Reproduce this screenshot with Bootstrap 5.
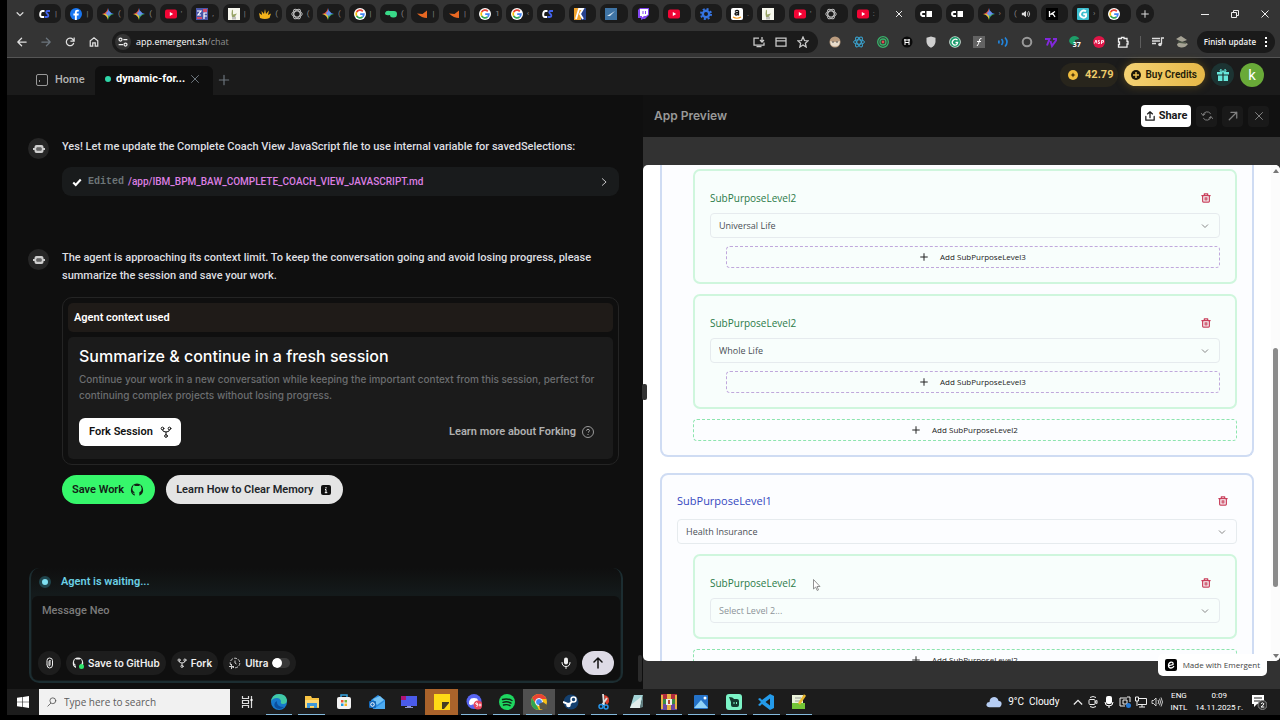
<!DOCTYPE html>
<html lang="en">
<head>
<meta charset="utf-8">
<meta name="viewport" content="width=device-width, initial-scale=1">
<title>Emergent – App Preview</title>
<link href="https://cdn.jsdelivr.net/npm/bootstrap@5.3.0/dist/css/bootstrap.min.css" rel="stylesheet">
<style>
  body{font-family:Roboto,"Liberation Sans",sans-serif;font-size:11px;line-height:18px;color:#dcdcdc;background:#000;height:100vh;overflow:hidden;padding:0 0 5px 7px}
  svg{display:block;flex:none}
  button,input,select,textarea{font-family:inherit}
  button{border:0;background:none;color:inherit;padding:0}
  a{color:inherit;text-decoration:none}
  .s8{width:8px;height:8px}.s10{width:10px;height:10px}.s12{width:12px;height:12px}.s14{width:14px;height:14px}.s16{width:16px;height:16px}
  .ln,.ln3{fill:none;stroke:currentColor;stroke-width:2;stroke-linecap:round;stroke-linejoin:round}
  .ln3{stroke-width:3}
  .inter{font-family:Inter,"Liberation Sans",sans-serif}
  .segoe{font-family:"Open Sans","Noto Sans",sans-serif}

  /* browser chrome */
  .strip{background:#343434;height:27px;padding-left:8px}
  .chev{width:19px}
  .btab{flex:1 1 0;min-width:0;height:19px;background:#1b1b1b;border-radius:7px;padding-left:5px;overflow:hidden;font-size:8px;color:#888;gap:4px}
  .btab.on{background:none;color:#eee}
  .newtab{width:18px;height:19px;border-radius:9px;background:#1b1b1b;margin:0 36px 0 5px}
  .winbtn{width:30px;height:27px}
  .tools{background:#343434;height:31px;border-bottom:1px solid #555;padding:3px 5px 4px 3px}
  .nav-b{width:24px;height:22px;color:#e0e0e0}
  .urlbar{background:#1b1b1b;border-radius:11px;height:22px;margin-left:6px;padding:0 9px 0 3px;font-size:9px;font-weight:500}
  .site{width:16px;height:16px;border-radius:50%;background:#343434;margin-right:5px}
  .exts{margin-left:11px;gap:12px}
  .finish{background:#1a1a1a;border-radius:11px;height:22px;padding:0 5px 0 7px;font-size:8px;font-weight:600;color:#f2f2f2;margin-left:9px}

  /* app header */
  .apphead{background:#1b1b1b;height:37px;padding:0 16px 0 28px}
  .hometab{color:#b4b4b4;width:60px;padding-top:6px;gap:6px}
  .worktab{background:#0f0f0f;border-radius:6px 6px 0 0;height:29px;width:118px;padding:0 12px 4px 10px;color:#fff;font-weight:700}
  .dot{width:6px;height:6px;flex:none;border-radius:50%;background:#2fd6a8;margin-right:5px}
  .credits{background:#28251c;border-radius:12px;height:24px;padding:0 5px 0 7px;gap:6px;color:#edcb6a;font-weight:700}
  .buy{background:linear-gradient(90deg,#f5d273,#e6b847);border-radius:12px;height:23px;padding:0 8px 0 7px;gap:4px;color:#241c08;font-weight:600;font-size:10px;box-shadow:0 0 8px #8a6b1c99}
  .gift{width:23px;height:23px;border-radius:50%;background:#1c3332;color:#67e8dc}
  .who{width:24px;height:24px;border-radius:50%;background:#69aa38;color:#fff;font-size:15px}

  /* chat */
  .chat{background:#0f0f0f;width:636px;flex:none;padding:0 20px 6px 21px}
  .bot{width:21px;height:21px;border-radius:50%;background:#262626;color:#cfcfcf;flex:none}
  .msg{gap:13px;color:#dedee0;margin-right:4px}
  .first{margin-top:43px;margin-bottom:53px}
  .msgtext{font-weight:500;font-size:11px;line-height:18px}
  .edited{background:#191b1c;border-radius:9px;height:29px;padding:0 10px;margin:11px 0 0}
  .mono{font-family:"Liberation Mono",monospace;font-size:10px;font-weight:700;color:#6d7577;margin:0 4px 0 6px}
  .path{color:#dd7fe3;font-size:10px;font-weight:500}
  .fork{border:1px solid #242424;border-radius:10px;padding:5px;margin-top:12px;gap:5px}
  .forkhead{background:#1f1b18;border-radius:5px;height:29px;padding:0 6px;color:#fff;font-weight:600}
  .forkbody{background:#1b1b1b;border-radius:5px;padding:8px 11px 13px}
  .forkbody h2{font-size:16px;line-height:22px;font-weight:500;color:#fff;margin:0}
  .forkbody p{font-size:10px;line-height:16px;color:#6c6e70;font-weight:500;margin:4px 0 15px}
  .bfork{background:#fff;color:#111;border-radius:6px;height:28px;padding:0 9px 0 10px;gap:7px;font-weight:600}
  .learn{color:#b0b0b0;gap:6px;font-weight:600;margin-right:8px}
  .pill{height:29px;border-radius:15px;padding:0 11px 0 10px;gap:6px;font-weight:600;color:#122015}
  .composer{margin:0 0 0 1px;border-radius:10px;border:2px solid #1c2d31;border-top-width:0;background:linear-gradient(#0f0f0f,#141a1b 26px);padding:0 1px 1px}
  .composer-in{background:#0f0f0f;border-radius:6px;padding:4px 6px 5px}
  .waiting{height:28px;color:#6bd0e6;font-weight:600;padding-left:7px;gap:10px}
  .ring{width:12px;height:12px;border-radius:50%;border:3px solid #20454d;background:#7fe0f2}
  .composer textarea{display:block;background:none;border:0;color:#fff;height:51px;resize:none;width:100%;padding:2px 4px;font-weight:500;outline:0}
  .composer textarea::placeholder{color:#7b7b7b}
  .chip{background:#1d1d1d;border-radius:12px;height:24px;padding:0 6px;color:#f0f0f0;font-weight:600;font-size:10px;gap:4px}
  .round{width:23px;padding:0}
  .send{background:#dedbe6;color:#111;width:32px;height:24px;border-radius:12px}
  .chip .form-check-input{width:18px;height:10px;min-height:0;margin:0;border:0;background-color:#383838;background-image:url("data:image/svg+xml,%3csvg xmlns='http://www.w3.org/2000/svg' viewBox='-4 -4 8 8'%3e%3ccircle r='4' fill='%23fff'/%3e%3c/svg%3e")}
  .form-switch{padding:0;min-height:0;margin:0}
  .thumbL{right:1px;bottom:7px;width:4px;height:27px;border-radius:2px;background:#2b2b2b}
  .grip{right:-4px;top:289px;width:5px;height:16px;border-radius:2px;background:#333;z-index:3}

  /* preview */
  .preview{background:#323232;min-width:0}
  .prevhead{background:#111;height:42px;padding:0 11px;font-size:12px;font-weight:600;color:#999}
  .share{background:#fff;color:#181818;border-radius:4px;width:50px;height:22px;font-size:11px;font-weight:700;gap:4px}
  .sq{width:21px;height:21px;border-radius:4px;background:#191919;color:#808080}
  .frame{background:#fff;margin:28px 0 28px;border-radius:5px;overflow:hidden;color:#333;font-size:9px}
  .page-in{padding:0 18px 0 17px}
  .l1{border:2px solid #cfdcf3;border-radius:8px;background:#fcfdff;padding:17px 15px 14px}
  .l1.cut{border-top:0;border-radius:0 0 8px 8px;padding-top:4px}
  .l2{border:2px solid #cff6dd;border-radius:7px;background:#f8fefc;padding:18px 15px 14px;margin-left:16px}
  .lab1{font-size:11px;font-weight:500;line-height:18px;color:#3447c0}
  .lab2{font-size:10px;font-weight:500;line-height:18px;color:#2c7a48}
  .trash{color:#c9405c;margin-right:9px}
  .frame .form-select{font-size:9px;line-height:14px;height:25px;padding:4px 24px 4px 8px;border:1px solid #e6ebee;border-radius:4px;background-color:transparent;color:#4a4f55;background-size:8px;background-position:right 10px center;margin-top:6px;background-image:url("data:image/svg+xml,%3csvg xmlns='http://www.w3.org/2000/svg' viewBox='0 0 16 16'%3e%3cpath fill='none' stroke='%23888' stroke-width='2' d='m2 5 6 6 6-6'/%3e%3c/svg%3e")}
  .frame .form-select.muted{color:#8d9499}
  .frame .form-select.top{margin-top:9px}
  .add{border:1px dashed #8ce5ae;border-radius:4px;height:22px;width:100%;font-size:8px;font-weight:500;color:#222;gap:12px}
  .add.p{border-color:#c0a8dc;width:auto;align-self:stretch;margin:8px 0 0 16px}
  .bar-r{width:9px;right:0;top:0;bottom:0;background:#fcfcfc;color:#777;padding:4px 0 3px}
  .thumbR{width:5px;height:239px;margin-top:175px;border-radius:3px;background:#8b8b8b}
  .made{right:13px;bottom:13px;height:22px;border-radius:5px;background:#fff;color:#444;padding:0 7px;gap:6px;font-size:8px;font-weight:500}
  .cursor{left:170px;top:484px}

  /* taskbar */
  .taskbar{background:#1c1c1c;height:26px;color:#fff}
  .start{width:32px}
  .search{background:#f1f1f1;width:191px;height:26px;padding-left:8px;gap:7px;color:#555}
  .search input{border:0;background:none;font-size:10px;width:150px;padding:0;color:#444;outline:0}
  .search input::placeholder{color:#5c5c5c}
  .tv{width:33px}
  .apps{width:552px}
  .app{flex:1 1 0;height:26px;position:relative}
  .app.run::after{content:"";position:absolute;left:3px;right:3px;bottom:0;height:1px;background:#84b9dc}
  .tray{font-family:Roboto,sans-serif;font-size:8px;line-height:12px;text-align:center}
  .weather{font-size:10px;gap:6px;margin-right:9px}
</style>
</head>
<body class="d-flex flex-column">
<svg width="0" height="0" class="position-absolute" aria-hidden="true">
  <symbol id="cs" viewBox="0 0 12 12"><path d="M5.500 3H3.500Q1.500 3 1.200 6Q1 9 3 9H5" fill="none" stroke="#fff" stroke-width="2"/><path d="M11 3H8Q6.500 4 8 5.500L9 6.500Q10 8.500 8 9H5.500" fill="none" stroke="#4263eb" stroke-width="1.800"/></symbol>
  <symbol id="fb" viewBox="0 0 12 12"><circle cx="6" cy="6" r="6" fill="#1877f2"/><path d="M6.800 12V7.500h1.700l.3-1.900h-2V4.500q0-1 1.100-1h.9V1.900q-3.800-.7-3.900 2v1.700H3.400v1.900h1.500V12z" fill="#fff"/></symbol>
  <symbol id="gem" viewBox="0 0 12 12"><path d="M6 0Q7 5 12 6L6 6z" fill="#4285f4"/><path d="M6 0Q5 5 0 6H6z" fill="#ea5a45"/><path d="M0 6Q5 7 6 12V6z" fill="#e8c33a"/><path d="M12 6Q7 7 6 12V6z" fill="#37a864"/><circle cx="6.500" cy="5.500" r="2.300" fill="#6f8fe8"/></symbol>
  <symbol id="yt" viewBox="0 0 12 12"><rect y="1.500" width="12" height="9" rx="2" fill="#f20535"/><path d="M4.800 4v4l3.400-2z" fill="#fff"/></symbol>
  <symbol id="zf" viewBox="0 0 12 12"><path fill="#4a56a8" d="M0 0h12v12H0z"/><path d="M1 3h4L2 7h3M8 8h3M8 11V5h3" stroke="#fff" stroke-width="1.200" fill="none"/><path d="M7 1h4v3H7zM1 9h5v2H1z" fill="#d44a68"/></symbol>
  <symbol id="goose" viewBox="0 0 12 12"><path fill="#f7f7ee" d="M0 0h12v12H0z"/><path d="M4 1.500l1 1v4l4-1L6.500 9H4L3.500 6z" fill="#98a467"/><path d="M5 9v2.500M7 8.500v3" stroke="#888"/></symbol>
  <symbol id="claw" viewBox="0 0 12 12"><path d="M1 10L0 5l3 2-.5-4L5 6l1-5 1 5 3-3.500L9 7l3-1.500L10.500 10Q6 12 1 10z" fill="#f2b21b"/></symbol>
  <symbol id="oai" viewBox="0 0 12 12"><g fill="none" stroke="#bbb"><ellipse cx="6" cy="6" rx="5.200" ry="3"/><ellipse cx="6" cy="6" rx="5.200" ry="3" transform="rotate(60 6 6)"/><ellipse cx="6" cy="6" rx="5.200" ry="3" transform="rotate(120 6 6)"/></g></symbol>
  <symbol id="goo" viewBox="0 0 12 12"><circle cx="6" cy="6" r="6" fill="#fff"/><g fill="none" stroke-width="1.700"><path d="M8.800 3.300A3.900 3.900 0 0 0 2.600 4.200" stroke="#ea4335"/><path d="M2.600 4.200a3.900 3.900 0 0 0 0 3.600" stroke="#fbbc05"/><path d="M2.600 7.800a3.900 3.900 0 0 0 6 1.100" stroke="#34a853"/><path d="M8.600 8.900A3.900 3.900 0 0 0 9.900 6.100H6.200" stroke="#4285f4"/></g></symbol>
  <symbol id="grn" viewBox="0 0 12 12"><path d="M0 5Q1 2 5 3h4q3 0 3 3 0 4-4 3.500Q5 9.500 5 7 0 8 0 5z" fill="#39d988"/></symbol>
  <symbol id="org" viewBox="0 0 12 12"><path d="M1 5.500L6.500 6 11 2.500V10Q6 10 1 5.500z" fill="#e86822"/></symbol>
  <symbol id="kick" viewBox="0 0 12 12"><path fill="#f0a32d" d="M0 0h7v12H0z"/><path fill="#26418f" d="M7 0h5v12H7z"/><path d="M2 11L5 1h4L6 6l3 5" fill="none" stroke="#fff" stroke-width="1.800"/></symbol>
  <symbol id="blu" viewBox="0 0 12 12"><path fill="#3f74a5" d="M0 0h12v12H0z"/><path d="M2 8l8-5-5 5z" fill="#d7e8f5"/></symbol>
  <symbol id="tw" viewBox="0 0 12 12"><path d="M1 2l2-2h9v7L8 11H6l-2 1v-2H1z" fill="#8447f3"/><path d="M3 1h8v5.500L9 8H7L5 9.500V8H3z" fill="#fff"/><path d="M6 3v3M8.500 3v3" stroke="#8447f3"/></symbol>
  <symbol id="gear" viewBox="0 0 12 12"><circle cx="6" cy="6" r="3.200" fill="none" stroke="#3574e2" stroke-width="2.400"/><circle cx="6" cy="6" r="5" fill="none" stroke="#3574e2" stroke-width="2" stroke-dasharray="2 1.930"/></symbol>
  <symbol id="amz" viewBox="0 0 12 12"><rect width="12" height="12" rx="2" fill="#fff"/><path d="M4 3.500Q6 1.500 7.500 3v4.500M7.500 4.500Q4 4.500 4 6q.5 2 3.500 0" fill="none" stroke="#111" stroke-width="1.300"/><path d="M2 9q4 2.500 8 0" fill="none" stroke="#f59a1c" stroke-width="1.200"/></symbol>
  <symbol id="ce" viewBox="0 0 12 12"><path d="M5 4H2.500Q1 4.500 1 6t1.500 2H5" fill="none" stroke="#fff" stroke-width="2"/><path d="M6.500 3H12v6H6.500z" fill="#fff"/></symbol>
  <symbol id="snd" viewBox="0 0 12 12"><path d="M1 4.500v3h2L6 10V2L3 4.500z" fill="#ddd"/><path d="M7.500 4q1.500 2 0 4M9 2.500q3 3.500 0 7" fill="none" stroke="#ddd"/></symbol>
  <symbol id="spk" viewBox="0 0 12 12"><path d="M1 4.500v3h1.500L5 10V2L2.500 4.500zM7 4q1.500 2 0 4M8.500 2.700q2 3.300 0 6.600M10 1.500q3 4.500 0 9" fill="none" stroke="#ddd" stroke-width=".9"/></symbol>
  <symbol id="kk" viewBox="0 0 12 12"><path fill="#000" d="M0 0h12v12H0z"/><path d="M3.500 3v6M9 3.500L5 6h2l2 3" fill="none" stroke="#fff" stroke-width="1.300"/></symbol>
  <symbol id="gt" viewBox="0 0 12 12"><rect width="12" height="12" rx="1" fill="#3dbfd0"/><path d="M9 3.300Q6 1.500 4 4t0 4.500q3 2.500 5 0V6.300H6.300" fill="none" stroke="#fff" stroke-width="1.900"/></symbol>
  <symbol id="x" viewBox="0 0 24 24"><path class="ln" d="M5 5l14 14M19 5L5 19"/></symbol>
  <symbol id="xb" viewBox="0 0 24 24"><path class="ln3" d="M4 4l16 16M20 4L4 20"/></symbol>
  <symbol id="plus" viewBox="0 0 24 24"><path class="ln" d="M12 4v16M4 12h16"/></symbol>
  <symbol id="plusb" viewBox="0 0 24 24"><path class="ln3" d="M12 2v20M2 12h20"/></symbol>
  <symbol id="down" viewBox="0 0 24 24"><path class="ln3" d="M5 9l7 7 7-7"/></symbol>
  <symbol id="right" viewBox="0 0 24 24"><path class="ln" d="M8 4l9 8-9 8"/></symbol>
  <symbol id="trash" viewBox="0 0 24 24"><path class="ln3" d="M2 6h20M8 6V2h8v4M4 6v14q0 2 2 2h12q2 0 2-2V6M10 11v6M14 11v6"/></symbol>
  <symbol id="bot" viewBox="0 0 24 24"><path fill="currentColor" fill-rule="evenodd" d="M7 4h10q4 0 4 4v8q0 4-4 4H7q-4 0-4-4V8q0-4 4-4zm0 6v4q0 1 1 1h8q1 0 1-1v-4q0-1-1-1H8q-1 0-1 1zM0 10h3v4H0zM21 10h3v4h-3z"/><path d="M9 12h2M13 12h2" stroke="currentColor" stroke-width="3"/></symbol>
  <symbol id="forki" viewBox="0 0 24 24"><g class="ln"><circle cx="5" cy="5" r="2.700"/><circle cx="19" cy="5" r="2.700"/><circle cx="12" cy="20" r="2.700"/><path d="M5 8q0 4 7 4t7-4M12 12v5"/></g></symbol>
  <symbol id="ghc" viewBox="0 0 24 24"><path fill="currentColor" d="M12 1a11 11 0 0 0-4 21v-4q-3 1-4-2 3 2 4 0-4-1-4-6 0-2 1-3 0-2 1-3 2 0 3 1h6q1-1 3-1 1 1 1 3 1 1 1 3 0 5-4 6v6A11 11 0 0 0 12 1z"/></symbol>
  <symbol id="cloud" viewBox="0 0 18 14"><path d="M4 13Q0 12.500.5 9.500 1 7 4 7 4 2 9 1.500q4 0 5 4 4 .5 3.500 4Q17 13 14 13z" fill="#b6cdf3"/></symbol>
</svg>

<!-- browser tabs -->
<div class="strip d-flex align-items-center flex-shrink-0">
  <button class="chev" aria-label="Search tabs"><svg class="s10"><use href="#down"/></svg></button>
  <nav class="d-flex flex-grow-1 gap-1" aria-label="Browser tabs" id="tabs">
    <a href="#" class="btab d-flex align-items-center"><svg class="s12"><use href="#cs"/></svg>|</a>
    <a href="#" class="btab d-flex align-items-center"><svg class="s12"><use href="#fb"/></svg>|</a>
    <a href="#" class="btab d-flex align-items-center"><svg class="s12"><use href="#gem"/></svg>(</a>
    <a href="#" class="btab d-flex align-items-center"><svg class="s12"><use href="#gem"/></svg>(</a>
    <a href="#" class="btab d-flex align-items-center"><svg class="s12"><use href="#yt"/></svg>'</a>
    <a href="#" class="btab d-flex align-items-center"><svg class="s12"><use href="#zf"/></svg>,</a>
    <a href="#" class="btab d-flex align-items-center"><svg class="s12"><use href="#goose"/></svg>|</a>
    <a href="#" class="btab d-flex align-items-center"><svg class="s12"><use href="#claw"/></svg>(</a>
    <a href="#" class="btab d-flex align-items-center"><svg class="s12"><use href="#oai"/></svg>(</a>
    <a href="#" class="btab d-flex align-items-center"><svg class="s12"><use href="#gem"/></svg>(</a>
    <a href="#" class="btab d-flex align-items-center"><svg class="s12"><use href="#goo"/></svg>|</a>
    <a href="#" class="btab d-flex align-items-center"><svg class="s12"><use href="#grn"/></svg>(</a>
    <a href="#" class="btab d-flex align-items-center"><svg class="s12"><use href="#org"/></svg>|</a>
    <a href="#" class="btab d-flex align-items-center"><svg class="s12"><use href="#org"/></svg>|</a>
    <a href="#" class="btab d-flex align-items-center"><svg class="s12"><use href="#goo"/></svg>1</a>
    <a href="#" class="btab d-flex align-items-center"><svg class="s12"><use href="#goo"/></svg>‹</a>
    <a href="#" class="btab d-flex align-items-center"><svg class="s12"><use href="#cs"/></svg></a>
    <a href="#" class="btab d-flex align-items-center"><svg class="s12"><use href="#kick"/></svg></a>
    <a href="#" class="btab d-flex align-items-center"><svg class="s12"><use href="#blu"/></svg></a>
    <a href="#" class="btab d-flex align-items-center"><svg class="s12"><use href="#tw"/></svg></a>
    <a href="#" class="btab d-flex align-items-center"><svg class="s12"><use href="#yt"/></svg></a>
    <a href="#" class="btab d-flex align-items-center"><svg class="s12"><use href="#gear"/></svg></a>
    <a href="#" class="btab d-flex align-items-center"><svg class="s12"><use href="#amz"/></svg>.</a>
    <a href="#" class="btab d-flex align-items-center"><svg class="s12"><use href="#goose"/></svg></a>
    <a href="#" class="btab d-flex align-items-center"><svg class="s12"><use href="#yt"/></svg>'</a>
    <a href="#" class="btab d-flex align-items-center"><svg class="s12"><use href="#oai"/></svg></a>
    <a href="#" class="btab d-flex align-items-center"><svg class="s12"><use href="#yt"/></svg>:</a>
    <a href="#" class="btab on d-flex align-items-center justify-content-center"><svg class="s8"><use href="#xb"/></svg></a>
    <a href="#" class="btab d-flex align-items-center"><svg class="s12"><use href="#ce"/></svg></a>
    <a href="#" class="btab d-flex align-items-center"><svg class="s12"><use href="#ce"/></svg></a>
    <a href="#" class="btab d-flex align-items-center"><svg class="s12"><use href="#gem"/></svg>›</a>
    <a href="#" class="btab d-flex align-items-center">(<svg class="s10"><use href="#snd"/></svg></a>
    <a href="#" class="btab d-flex align-items-center"><svg class="s12"><use href="#kk"/></svg></a>
    <a href="#" class="btab d-flex align-items-center"><svg class="s12"><use href="#gt"/></svg>›</a>
    <a href="#" class="btab d-flex align-items-center"><svg class="s12"><use href="#goo"/></svg></a>
  </nav>
  <button class="newtab d-flex align-items-center justify-content-center" aria-label="New tab"><svg class="s8"><use href="#plusb"/></svg></button>
  <button class="winbtn d-flex align-items-center justify-content-center" aria-label="Minimize"><svg class="s8" viewBox="0 0 8 8"><path d="M0 4.500h8" stroke="#eee"/></svg></button>
  <button class="winbtn d-flex align-items-center justify-content-center" aria-label="Restore"><svg class="s8" viewBox="0 0 8 8"><path d="M.5 2.500h5v5h-5zM2.500 2V.5h5v5H6" fill="none" stroke="#eee"/></svg></button>
  <button class="winbtn d-flex align-items-center justify-content-center" aria-label="Close"><svg class="s8" viewBox="0 0 8 8"><path d="M.5.5l7 7M7.500.5l-7 7" stroke="#eee"/></svg></button>
</div>

<!-- address row -->
<div class="tools d-flex align-items-center flex-shrink-0 segoe">
  <button class="nav-b d-flex align-items-center justify-content-center" aria-label="Back"><svg class="s10" viewBox="0 0 24 24"><path class="ln3" d="M22 12H3M11 3l-9 9 9 9"/></svg></button>
  <button class="nav-b d-flex align-items-center justify-content-center text-secondary" aria-label="Forward"><svg class="s10" viewBox="0 0 24 24"><path class="ln3" d="M2 12h19M13 3l9 9-9 9"/></svg></button>
  <button class="nav-b d-flex align-items-center justify-content-center" aria-label="Reload"><svg class="s10" viewBox="0 0 24 24"><path fill="none" stroke="currentColor" stroke-width="3" d="M21 14a9 9 0 1 1-2-8l3 3M22 1v9h-9"/></svg></button>
  <button class="nav-b d-flex align-items-center justify-content-center" aria-label="Home page"><svg class="s10" viewBox="0 0 24 24"><path fill="none" stroke="currentColor" stroke-width="3" d="M3 22V9l9-7 9 7v13h-6v-8H9v8z"/></svg></button>
  <div class="urlbar d-flex align-items-center flex-grow-1">
    <button class="site d-flex align-items-center justify-content-center" aria-label="Site information"><svg class="s10" viewBox="0 0 16 16"><g fill="none" stroke="#eee" stroke-width="2"><circle cx="4" cy="4" r="2.400"/><path d="M8.500 4H15M1 12h7"/><circle cx="12" cy="12" r="2.400"/></g></svg></button>
    <div class="flex-grow-1 text-white" role="textbox" aria-label="Address" contenteditable="true" spellcheck="false">app.emergent.sh<span style="color:#8f8f8f">/chat</span></div>
    <div class="d-flex align-items-center" style="gap:10px">
      <svg class="s12" viewBox="0 0 24 24"><path fill="none" stroke="#ccc" stroke-width="2.500" d="M12 4H2v14h20v-5M7 21h10M18 2v9M14 8l4 4 4-4"/></svg>
      <svg class="s12" viewBox="0 0 24 24"><path fill="none" stroke="#ccc" stroke-width="2.500" d="M2 4h20v16H2zM2 9.500h20"/></svg>
      <svg class="s12" viewBox="0 0 24 24"><path fill="none" stroke="#ccc" stroke-width="2.500" d="M12 2l3 7 7 .7-5.300 4.800L18.300 22 12 18l-6.300 4 1.600-7.500L2 9.700 9 9z"/></svg>
    </div>
  </div>
  <div class="exts d-flex align-items-center">
    <svg class="s12" viewBox="0 0 12 12"><circle cx="6" cy="6" r="5.500" fill="#b99b7e"/><path d="M1 5q5 2 10 0l-1 4q-4 3-8 0z" fill="#e8dccb"/><path d="M3 6h2M7 6h2" stroke="#555"/></svg>
    <svg class="s12" viewBox="0 0 12 12"><g fill="none" stroke="#3aa3cf"><ellipse cx="6" cy="6" rx="5.500" ry="2.200"/><ellipse cx="6" cy="6" rx="5.500" ry="2.200" transform="rotate(60 6 6)"/><ellipse cx="6" cy="6" rx="5.500" ry="2.200" transform="rotate(120 6 6)"/></g></svg>
    <svg class="s12" viewBox="0 0 12 12"><g fill="none" stroke="#39b36b" stroke-width="1.300"><circle cx="6" cy="6" r="5.300"/><circle cx="6" cy="6" r="3"/></g><circle cx="6" cy="6" r="1.400" fill="#e05050"/></svg>
    <svg class="s12" viewBox="0 0 12 12"><circle cx="6" cy="6" r="5.500" fill="#0a0a0a"/><path d="M4 3v6M8 3v6M3 4h6M4 6.500h4" stroke="#fff"/></svg>
    <svg class="s12" viewBox="0 0 12 12"><path d="M6 .5l4.500 1.300V6Q10 10 6 11.700 2 10 1.500 6V1.800z" fill="#cfcfcf"/></svg>
    <svg class="s12" viewBox="0 0 12 12"><circle cx="6" cy="6" r="5.800" fill="#cfe8dd"/><circle cx="6" cy="6" r="5" fill="#1d9b6c"/><path d="M8.500 4Q6 2 4 4.500T5 9q3 .8 3.600-2.500H6.500" fill="none" stroke="#fff" stroke-width="1.300"/></svg>
    <svg class="s12" viewBox="0 0 12 12"><path fill="#626262" d="M0 0h12v12H0z"/><path d="M8.500 2.500Q6.500 2 6.200 5T4 10M4 5.500h4" fill="none" stroke="#fff"/></svg>
    <svg class="s12" viewBox="0 0 12 12"><g fill="none" stroke="#2287e0" stroke-width="1.600"><path d="M1.500 4.500q1 1.500 0 3M4.500 3q2.500 3 0 6M8 1.500q4 4.500 0 9"/></g></svg>
    <svg class="s12" viewBox="0 0 12 12"><circle cx="6" cy="6" r="4.300" fill="none" stroke="#999" stroke-width="2"/></svg>
    <svg class="s12" viewBox="0 0 12 12"><path d="M0 3h4.500L2 9.500M5.500 5L7 10l5-7H8" fill="none" stroke="#8228dc" stroke-width="2"/></svg>
    <span class="position-relative s12"><svg class="s12" viewBox="0 0 12 12"><path d="M0 5Q1 0 6 0q4 1 4 3L6 4v5Q1 9 0 5z" fill="#1d9d68"/></svg><b class="position-absolute start-0 top-0 ms-1 mt-1 text-white" style="font-size:7px;line-height:10px">37</b></span>
    <svg class="s12" viewBox="0 0 12 12"><circle cx="6" cy="6" r="6" fill="#df1547"/><path d="M1.500 7.500L3 4l1 3.500M6.700 4.500H5.300V6h1.300v1.500H5M8.500 8V4.500h2V6.200h-2" fill="none" stroke="#fff" stroke-width=".9"/></svg>
    <svg class="s12" viewBox="0 0 12 12"><path d="M1.500 2.500h3V1.300h2.500v1.200h3v3h1v2.500h-1v3.200H1.500V8.500h1V6h-1z" fill="none" stroke="#eee" stroke-width="1.300"/></svg>
    <span class="vr" style="margin:0 -1px"></span>
    <svg class="s12" viewBox="0 0 12 12"><path d="M0 2.500h8M0 5h8M0 7.500h4M9.500 8V2H12" stroke="#ddd" stroke-width="1.300" fill="none"/><circle cx="8" cy="8.500" r="1.800" fill="#ddd"/></svg>
    <svg class="s12" viewBox="0 0 12 12"><path d="M0 3l5-3 6 4-5 2zM1 8q5-4 11 0-3 4-7 3.500T1 8z" fill="#a5a294"/><path d="M2 6l8 1" stroke="#4f5848" stroke-width="1.500"/></svg>
  </div>
  <button class="finish d-flex align-items-center text-nowrap">Finish update <svg class="ms-1 s10" viewBox="0 0 10 10"><path d="M5 0h2v2H5zM5 4h2v2H5zM5 8h2v2H5z" fill="#fff"/></svg></button>
</div>

<!-- app header -->
<header class="apphead d-flex align-items-end flex-shrink-0">
  <a href="#" class="hometab d-flex align-items-center align-self-center fw-medium"><svg class="s14" viewBox="0 0 14 14"><rect x="1.500" y="1.500" width="11" height="11" rx="1.500" fill="none" stroke="#999"/><path d="M4 7l1 1-1 1" fill="none" stroke="#999"/></svg>Home</a>
  <div class="worktab d-flex align-items-center"><i class="dot"></i><a href="#" class="text-nowrap">dynamic-for...</a><button class="ms-auto text-secondary" aria-label="Close tab"><svg class="s12"><use href="#x"/></svg></button></div>
  <button class="ms-1 pb-2 text-secondary" aria-label="New task"><svg class="s14"><use href="#plus"/></svg></button>
  <div class="ms-auto align-self-center d-flex align-items-center pb-1" style="gap:6px">
    <span class="credits d-flex align-items-center"><svg class="s12" viewBox="0 0 12 12"><circle cx="6" cy="6" r="5" fill="#f0bd3e"/><path d="M6 3.500l.8 1.700 1.700.8-1.700.8L6 8.500l-.8-1.700L3.500 6l1.700-.8z" fill="#4a3307"/></svg>42.79</span>
    <button class="buy d-flex align-items-center text-nowrap"><svg class="s10" viewBox="0 0 10 10"><circle cx="5" cy="5" r="5" fill="#1c1607"/><path d="M5 2v6M2 5h6" stroke="#edc255" stroke-width="1.400"/></svg>Buy Credits</button>
    <button class="gift d-flex align-items-center justify-content-center" aria-label="Rewards"><svg class="s12" viewBox="0 0 12 12"><path d="M0 3h5.400v2.500H0zM6.600 3H12v2.500H6.600zM1 6.500h4.400V12H1zM6.600 6.500H11V12H6.600z" fill="currentColor"/><path d="M6 3Q2 3 3 1t3 2q2-4 3-2T6 3z" fill="none" stroke="currentColor"/></svg></button>
    <button class="who">k</button>
  </div>
</header>

<main class="d-flex flex-grow-1" style="min-height:0">
  <!-- conversation -->
  <section class="chat d-flex flex-column position-relative">
    <div class="msg first d-flex">
      <span class="bot d-flex align-items-center justify-content-center"><svg class="s12"><use href="#bot"/></svg></span>
      <div class="flex-grow-1">
        <div class="msgtext">Yes! Let me update the Complete Coach View JavaScript file to use internal variable for savedSelections:</div>
        <div class="edited d-flex align-items-center"><svg class="s10 text-white" viewBox="0 0 24 24"><path d="M3 13l6 6L21 6" fill="none" stroke="currentColor" stroke-width="5"/></svg><span class="mono">Edited</span><a href="#" class="path">/app/IBM_BPM_BAW_COMPLETE_COACH_VIEW_JAVASCRIPT.md</a><svg class="s10 ms-auto" viewBox="0 0 24 24"><use href="#right"/></svg></div>
      </div>
    </div>
    <div class="msg d-flex">
      <span class="bot d-flex align-items-center justify-content-center"><svg class="s12"><use href="#bot"/></svg></span>
      <div class="flex-grow-1">
        <div class="msgtext">The agent is approaching its context limit. To keep the conversation going and avoid losing progress, please summarize the session and save your work.</div>
        <div class="fork d-flex flex-column">
          <div class="forkhead d-flex align-items-center">Agent context used</div>
          <div class="forkbody">
            <h2 class="inter">Summarize &amp; continue in a fresh session</h2>
            <p class="inter">Continue your work in a new conversation while keeping the important context from this session, perfect for continuing complex projects without losing progress.</p>
            <div class="d-flex justify-content-between align-items-center">
              <button class="bfork d-flex align-items-center">Fork Session <svg class="s12"><use href="#forki"/></svg></button>
              <a href="#" class="learn d-flex align-items-center">Learn more about Forking <svg class="s12" viewBox="0 0 12 12"><circle cx="6" cy="6" r="5.500" fill="none" stroke="#999"/><path d="M4.500 4.700Q4.700 3.300 6 3.300t1.500 1.300Q7.500 5.500 6 6.500M6 8v1" fill="none" stroke="#aaa"/></svg></a>
            </div>
          </div>
        </div>
        <div class="d-flex" style="gap:11px;margin-top:10px">
          <button class="pill d-flex align-items-center" style="background:#36f76b">Save Work <svg class="s14"><use href="#ghc"/></svg></button>
          <button class="pill d-flex align-items-center text-dark" style="background:#e4e4e4">Learn How to Clear Memory <svg class="s12" viewBox="0 0 12 12"><rect x="1" y="1" width="10" height="10" rx="2" fill="#111"/><path d="M6 3v1.500M5 5.500h1V9M4.800 8.700h2.500" stroke="#fff" fill="none"/></svg></button>
        </div>
      </div>
    </div>
    <div class="composer mt-auto">
      <div class="waiting d-flex align-items-center"><i class="ring"></i>Agent is waiting...</div>
      <div class="composer-in">
        <textarea placeholder="Message Neo" aria-label="Message Neo"></textarea>
        <div class="d-flex align-items-center inter" style="gap:5px">
          <button class="chip round d-flex align-items-center justify-content-center" aria-label="Attach"><svg class="s12" viewBox="0 0 24 24"><path class="ln" d="M12 7v9q0 2-2 2M6 15V7q0-5 5-5 6 0 6 5v9q0 6-6 6-5 0-5-6M12 7q-2 0-2 2v7"/></svg></button>
          <button class="chip d-flex align-items-center text-nowrap"><span class="position-relative"><svg class="s12"><use href="#ghc"/></svg><i class="position-absolute bottom-0 end-0 rounded-circle" style="width:5px;height:5px;background:#2ee66b"></i></span>Save to GitHub</button>
          <button class="chip d-flex align-items-center"><svg class="s10"><use href="#forki"/></svg>Fork</button>
          <div class="chip d-flex align-items-center"><svg class="s12" viewBox="0 0 12 12"><circle cx="6" cy="6" r="4.800" fill="none" stroke="#ccc" stroke-dasharray="3 1.200"/><path d="M6 3.500V6l1.500 1M0 9.500h5M2.500 7v5" stroke="#ccc" fill="none"/></svg><label for="ultra">Ultra</label><span class="form-check form-switch"><input class="form-check-input float-none d-block" type="checkbox" role="switch" id="ultra"></span></div>
          <button class="chip round d-flex align-items-center justify-content-center ms-auto" aria-label="Dictate"><svg class="s12" viewBox="0 0 24 24"><rect x="8" y="1" width="8" height="14" rx="4" fill="currentColor"/><path class="ln" d="M4 11q0 8 8 8t8-8M12 19v4"/></svg></button>
          <button class="send d-flex align-items-center justify-content-center" aria-label="Send"><svg class="s12" viewBox="0 0 24 24"><path class="ln3" d="M12 22V2M4 10l8-8 8 8"/></svg></button>
        </div>
      </div>
    </div>
    <i class="thumbL position-absolute"></i>
    <i class="grip position-absolute"></i>
  </section>

  <!-- preview -->
  <section class="preview d-flex flex-column flex-grow-1 position-relative">
    <div class="prevhead d-flex align-items-center flex-shrink-0"><span class="inter">App Preview</span>
      <div class="d-flex align-items-center ms-auto" style="gap:5px">
        <button class="share d-flex align-items-center justify-content-center"><svg class="s10" viewBox="0 0 24 24"><path class="ln3" d="M2 13v9h20v-9M12 16V2M6 7l6-5 6 5"/></svg>Share</button>
        <button class="sq d-flex align-items-center justify-content-center" aria-label="Refresh"><svg class="s12" viewBox="0 0 24 24"><path class="ln" d="M4 10a8.500 8.500 0 0 1 15-3M20 14a8.500 8.500 0 0 1-15 3M1 7l3 4 4-3M23 17l-3-4-4 3"/></svg></button>
        <button class="sq d-flex align-items-center justify-content-center" aria-label="Open in new window"><svg class="s10" viewBox="0 0 24 24"><path class="ln3" d="M3 21L21 3M7 3h14v14"/></svg></button>
        <button class="sq d-flex align-items-center justify-content-center" aria-label="Close preview"><svg class="s12"><use href="#x"/></svg></button>
      </div>
    </div>
    <div class="frame segoe flex-grow-1 position-relative" style="min-height:0">
      <div class="page-in me-2">
        <div class="l1 cut">
          <div class="l2 d-flex flex-column">
            <div class="d-flex justify-content-between align-items-center"><label class="lab2" for="a1">SubPurposeLevel2</label><button class="trash" aria-label="Delete"><svg class="s10"><use href="#trash"/></svg></button></div>
            <select class="form-select" id="a1"><option>Universal Life</option></select>
            <button class="add p d-flex align-items-center justify-content-center"><svg class="s8"><use href="#plusb"/></svg>Add SubPurposeLevel3</button>
          </div>
          <div class="l2 d-flex flex-column" style="margin-top:10px">
            <div class="d-flex justify-content-between align-items-center"><label class="lab2" for="a2">SubPurposeLevel2</label><button class="trash" aria-label="Delete"><svg class="s10"><use href="#trash"/></svg></button></div>
            <select class="form-select" id="a2"><option>Whole Life</option></select>
            <button class="add p d-flex align-items-center justify-content-center"><svg class="s8"><use href="#plusb"/></svg>Add SubPurposeLevel3</button>
          </div>
          <div class="ps-3" style="margin-top:10px"><button class="add d-flex align-items-center justify-content-center"><svg class="s8"><use href="#plusb"/></svg>Add SubPurposeLevel2</button></div>
        </div>
        <div class="l1 mt-3">
          <div class="d-flex justify-content-between align-items-center"><label class="lab1" for="b">SubPurposeLevel1</label><button class="trash" aria-label="Delete"><svg class="s10"><use href="#trash"/></svg></button></div>
          <select class="form-select top" id="b"><option>Health Insurance</option></select>
          <div class="l2 d-flex flex-column" style="margin-top:10px">
            <div class="d-flex justify-content-between align-items-center"><label class="lab2" for="b1">SubPurposeLevel2</label><button class="trash" aria-label="Delete"><svg class="s10"><use href="#trash"/></svg></button></div>
            <select class="form-select muted" id="b1"><option>Select Level 2...</option></select>
          </div>
          <div class="ps-3" style="margin-top:10px"><button class="add d-flex align-items-center justify-content-center"><svg class="s8"><use href="#plusb"/></svg>Add SubPurposeLevel2</button></div>
        </div>
      </div>
      <div class="bar-r position-absolute d-flex flex-column align-items-center">
        <svg width="6" height="4" viewBox="0 0 6 4"><path d="M0 4l3-4 3 4z" fill="currentColor"/></svg>
        <i class="thumbR"></i>
        <svg class="mt-auto" width="6" height="4" viewBox="0 0 6 4"><path d="M0 0l3 4 3-4z" fill="currentColor"/></svg>
      </div>
    </div>
    <a href="#" class="made segoe position-absolute d-flex align-items-center text-nowrap"><svg class="s12" viewBox="0 0 12 12"><rect width="12" height="12" rx="2" fill="#000"/><path d="M3 7l5-1.500Q8.500 3 6 3.200 3.500 4 3.500 6.500T6 9q2 0 3-2" fill="none" stroke="#fff" stroke-width="1.300"/></svg>Made with Emergent</a>
    <svg class="cursor position-absolute" width="8" height="12" viewBox="0 0 8 12"><path d="M.5.5v9.500l2.200-2 1.500 3.500 1.300-.6L4 7.500h3z" fill="#fff" stroke="#777" stroke-width=".8"/></svg>
  </section>
</main>

<!-- taskbar -->
<footer class="taskbar d-flex align-items-center flex-shrink-0 segoe">
  <button class="start d-flex align-items-center justify-content-center" aria-label="Start"><svg class="s12" viewBox="0 0 12 12"><path d="M0 1.700L5.400 1v4.700H0zM6 .9L12 0v5.700H6zM0 6.300h5.400V11L0 10.300zM6 6.300h6V12l-6-.9z" fill="#fff"/></svg></button>
  <div class="search d-flex align-items-center"><svg class="s10" viewBox="0 0 24 24"><path class="ln" d="M2 22l7-7"/><circle class="ln" cx="14" cy="9" r="7"/></svg><input type="text" placeholder="Type here to search" aria-label="Type here to search"></div>
  <button class="tv d-flex align-items-center justify-content-center" aria-label="Task view"><svg class="s12" viewBox="0 0 12 12"><path d="M1.500 0v2.500h6V0M1.500 4.500h6v3h-6zM1.500 12V9.500h6V12M10.500 0v12" fill="none" stroke="#ddd" stroke-width="1.200"/><path d="M9.500 3h2v2h-2z" fill="#fff"/></svg></button>
  <div class="apps d-flex">
    <button class="app run d-flex align-items-center justify-content-center" aria-label="Edge"><svg class="s16" viewBox="0 0 16 16"><circle cx="8" cy="8" r="8" fill="#1779cc"/><path d="M0 8Q1 0 8 0t8 6q0 4-4 4-3 0-2-3-1-3-4-3-5 0-6 4z" fill="#41c9a5"/><path d="M6 7q-1 6 7 6-5 4-9 0-2-4 2-6z" fill="#0b4f9e"/></svg></button>
    <button class="app run d-flex align-items-center justify-content-center" aria-label="Files"><svg class="s16" viewBox="0 0 16 16"><path d="M1 2h6l1 2h7v10H1z" fill="#f8c443"/><path d="M1 6h14v7H1z" fill="#ffd975"/><path d="M3 14V9h10v5h-3v-2H6v2z" fill="#3f97d8"/></svg></button>
    <button class="app d-flex align-items-center justify-content-center" aria-label="Store"><svg class="s16" viewBox="0 0 16 16"><path d="M5 4V1h6v3" fill="none" stroke="#34a2e0" stroke-width="1.500"/><rect x="1" y="3" width="14" height="12" rx="2" fill="#f3f3f3"/><path fill="#ef5835" d="M5 6h2.500v2.500H5z"/><path fill="#78b63b" d="M8.500 6H11v2.500H8.500z"/><path fill="#1f9fe0" d="M5 9.500h2.500V12H5z"/><path fill="#f6b629" d="M8.500 9.500H11V12H8.500z"/></svg></button>
    <button class="app d-flex align-items-center justify-content-center" aria-label="Mail"><svg class="s16" viewBox="0 0 16 16"><path d="M2 6l7-5 7 5v9H4z" fill="#2b8ce0"/><path d="M4 5l7-3 4 4-7 5z" fill="#75c3f4"/><path d="M5 15l11-8v8z" fill="#4caaf0"/><rect y="7" width="7" height="7" rx="1" fill="#1468b8"/><circle cx="3.500" cy="10.500" r="1.800" fill="none" stroke="#fff"/></svg></button>
    <button class="app d-flex align-items-center justify-content-center" aria-label="Desktop"><svg class="s16" viewBox="0 0 16 16"><path fill="#4a5bea" d="M0 2h16v10H0z"/><path fill="#b01475" d="M0 2h5v4H0z"/><path fill="#8e95d0" d="M6 12h4v1h2v1H4v-1h2z"/></svg></button>
    <button class="app d-flex align-items-center justify-content-center" style="background:#aa632b" aria-label="Sticky notes"><svg class="s16" viewBox="0 0 16 16"><path fill="#ffda16" d="M0 0h16v16H0z"/><path d="M8 8h7v1l-5 6H8z" fill="#453d23"/></svg></button>
    <button class="app run d-flex align-items-center justify-content-center" aria-label="Discord"><svg class="s16" viewBox="0 0 16 16"><circle cx="8" cy="7.500" r="7.500" fill="#5865f2"/><path d="M3 10q0-4 2-5.500 3-1 6 0Q13 7 13 10q-2 2-3 .5H6Q5 12 3 10z" fill="#fff"/><circle cx="12" cy="11" r="4.500" fill="#e8475b"/><path d="M11 11Q9 10 10 9t1.500 1-1 3M12.500 11h3M14 9.500v3" fill="none" stroke="#fff" stroke-width=".9"/></svg></button>
    <button class="app run d-flex align-items-center justify-content-center" aria-label="Spotify"><svg class="s16" viewBox="0 0 16 16"><circle cx="8" cy="8" r="8" fill="#1ed760"/><path d="M3.500 5.500q5-1.500 9.500 1M4 8.300q4.500-1.300 8 .8M4.500 11q4-1 6.500.7" fill="none" stroke="#102416" stroke-width="1.400" stroke-linecap="round"/></svg></button>
    <button class="app run d-flex align-items-center justify-content-center" style="background:#505050" aria-label="Chrome"><svg class="s16" viewBox="0 0 16 16"><circle cx="8" cy="8" r="8" fill="#fbc116"/><path d="M1 4Q4 0 8 0q5 0 7.500 5H8L4.500 9z" fill="#e94335"/><path d="M1 4l5 8 2 4Q0 15 0 8q0-2 1-4z" fill="#30a552"/><circle cx="8" cy="8" r="3.500" fill="#4285f4" stroke="#fff"/><path d="M8 10l4-2 4 3v4H9z" fill="#5a5748"/></svg></button>
    <button class="app run d-flex align-items-center justify-content-center" aria-label="Steam"><svg class="s16" viewBox="0 0 16 16"><circle cx="8" cy="8" r="7.500" fill="#14406f"/><path d="M0 8l6 2.500 3-3" fill="none" stroke="#fff" stroke-width="2"/><circle cx="5.500" cy="11" r="2.300" fill="#fff"/><circle cx="10.500" cy="5.500" r="2.500" fill="#14406f" stroke="#fff" stroke-width="1.500"/></svg></button>
    <button class="app run d-flex align-items-center justify-content-center" aria-label="Snip"><svg class="s16" viewBox="0 0 16 16"><path d="M8 1q6 1 5 7l-2 3-2-3z" fill="#dc3e2c"/><path d="M7 0l1 11M11 4L6 11" stroke="#dedede" stroke-width="1.800"/><circle cx="5" cy="12.500" r="2" fill="none" stroke="#2795e9" stroke-width="1.500"/><circle cx="10" cy="13" r="2" fill="none" stroke="#2795e9" stroke-width="1.500"/></svg></button>
    <button class="app run d-flex align-items-center justify-content-center" aria-label="Notepad"><svg class="s16" viewBox="0 0 16 16"><path d="M6 1h9l-3 13H2z" fill="#a3d3d5"/><path d="M4 10l9-7-1 11H2z" fill="#e1edeb"/><path d="M12 14l3-13v12z" fill="#627f82"/></svg></button>
    <button class="app run d-flex align-items-center justify-content-center" aria-label="Archiver"><svg class="s16" viewBox="0 0 16 16"><path fill="#b12b3e" d="M0 0h16v5H0z"/><path fill="#388c43" d="M0 5h16v5H0z"/><path fill="#6948a1" d="M0 10h16v6H0z"/><path fill="#e8b144" d="M6 0h4v16H6zM0 1h2v14H0zM14 1h2v14h-2z"/><path fill="#eee" d="M5 5h6v6H5z"/><path fill="#b94b36" d="M7 6h2v4H7z"/></svg></button>
    <button class="app run d-flex align-items-center justify-content-center" aria-label="Photos"><svg class="s16" viewBox="0 0 16 16"><rect x="1" y="1" width="14" height="14" rx="1" fill="#2472c8"/><path d="M1 14l7-8 7 8z" fill="#90d3fa"/><circle cx="12" cy="4" r="1.500" fill="#fff"/></svg></button>
    <button class="app run d-flex align-items-center justify-content-center" aria-label="Streams"><svg class="s16" viewBox="0 0 16 16"><rect width="16" height="16" rx="3" fill="#7cf4c7"/><path d="M3 3q4 0 5 2h3q2 0 2 2v4q0 2-2 2H7q-2 0-2-2V8" fill="#143a30"/><path d="M8 8v2M10.500 8v2" stroke="#7cf4c7"/></svg></button>
    <button class="app run d-flex align-items-center justify-content-center" aria-label="Code"><svg class="s16" viewBox="0 0 16 16"><path d="M12 0l4 2v12l-4 2-8-6-2 2-2-1 3-3-3-3 2-1 2 2zm0 4.500L7.500 8l4.500 3.500z" fill="#249bea"/></svg></button>
    <button class="app run d-flex align-items-center justify-content-center" aria-label="Editor"><svg class="s16" viewBox="0 0 16 16"><path fill="#eaf2d9" d="M1 1h11v14H1z"/><path d="M1 9h13v6H1z" fill="#72c536"/><path d="M4 4h6M4 7h5" stroke="#9a9a9a"/><path d="M14 1l-6 9" stroke="#e9b72f" stroke-width="2.500"/></svg></button>
  </div>
  <div class="ms-auto d-flex align-items-center tray" style="gap:4px">
    <div class="weather d-flex align-items-center text-nowrap"><svg class="s16"><use href="#cloud"/></svg><span>9°C&nbsp; Cloudy</span></div>
    <svg class="s10" viewBox="0 0 12 12"><path d="M1 9l5-5 5 5" fill="none" stroke="#eee" stroke-width="1.500"/></svg>
    <svg class="s12" viewBox="0 0 12 12"><rect x="2" y="3.500" width="6" height="5" rx="1" fill="none" stroke="#eee"/><path d="M8 5.500l2-1v3l-2-1M3 1.500q3-2 6 0M3 10.500q3 2 6 0" fill="none" stroke="#eee"/></svg>
    <svg class="s12" viewBox="0 0 12 12"><rect x="3" y="0" width="6" height="8" rx="2" fill="#fff"/><path d="M2 6q0 4 4 4t4-4M6 9v3" fill="none" stroke="#fff"/></svg>
    <svg class="s12" viewBox="0 0 12 12"><path d="M1 2h7M1 2v8h5M4 4h4v4H4zM8 1h3v5" fill="none" stroke="#eee"/><circle cx="9.500" cy="9.500" r="2.500" fill="#2478d4"/></svg>
    <svg class="s12" viewBox="0 0 12 12"><path d="M3 2.500h8.500v6H3M7 8.500v2.500M4 11h6M.5 1h3v4h-3zM2 5v5" fill="none" stroke="#eee"/></svg>
    <svg class="s12"><use href="#spk"/></svg>
    <div class="ms-1">ENG<br>INTL</div>
    <div class="text-nowrap ms-1">0:09<br>14.11.2025 г.</div>
    <svg class="s16 ms-1" style="margin-right:13px" viewBox="0 0 16 16"><path d="M1 1h12v9H6l-3 3v-3H1z" fill="#fff"/><path d="M3 4h8M3 7h6" stroke="#222"/><circle cx="11.500" cy="11" r="4.500" fill="#333" stroke="#888"/><path d="M10 9.700q1.500-1.700 2.800 0Q13 11 10 13h3.200" fill="none" stroke="#fff"/></svg>
  </div>
</footer>
<script src="https://cdn.jsdelivr.net/npm/bootstrap@5.3.0/dist/js/bootstrap.bundle.min.js"></script>
</body>
</html>
